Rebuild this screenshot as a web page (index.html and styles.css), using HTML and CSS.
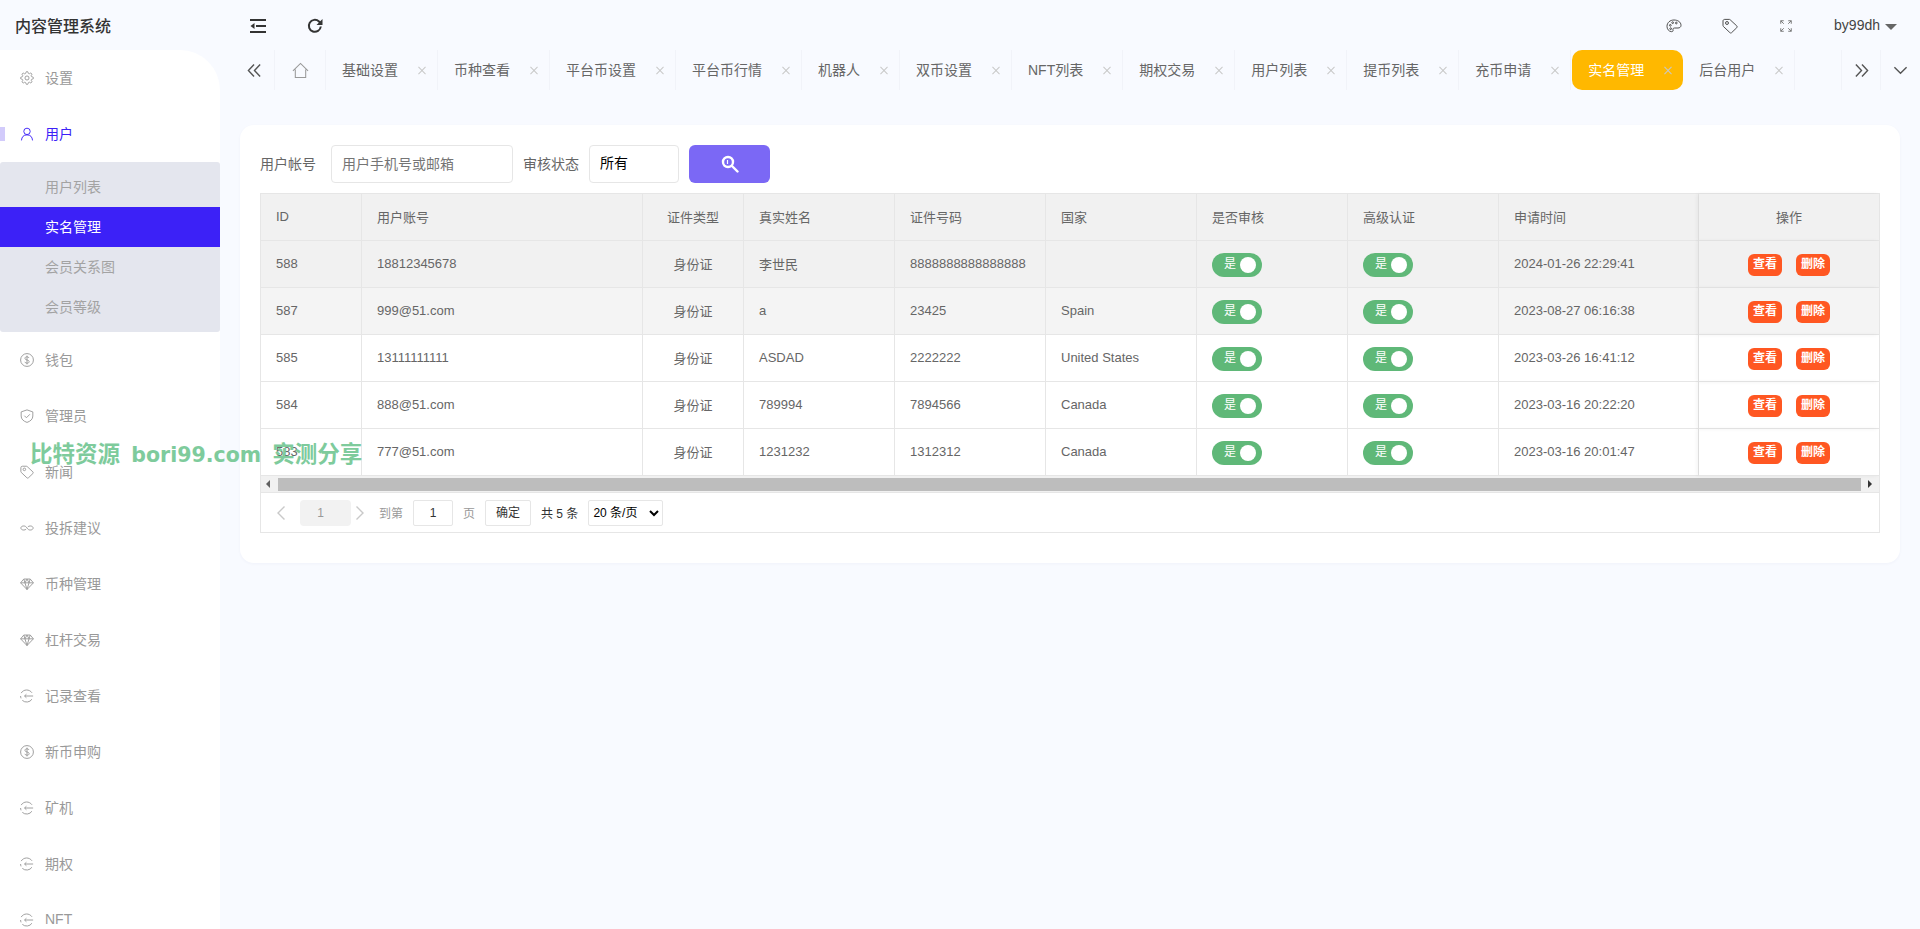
FILE: index.html
```html
<!DOCTYPE html>
<html lang="zh-CN">
<head>
    <meta charset="UTF-8">
    <link rel="stylesheet" href="styles.css">
    <title>内容管理系统</title>
</head>
<body>
<svg class="icon-defs" width="0" height="0">
  <symbol id="i-gear" viewBox="0 0 24 24"><circle cx="12" cy="12" r="3.5"/><path d="M19.4 15a1.65 1.65 0 0 0 .33 1.82l.06.06a2 2 0 0 1 0 2.83 2 2 0 0 1-2.83 0l-.06-.06a1.65 1.65 0 0 0-1.82-.33 1.65 1.65 0 0 0-1 1.51V21a2 2 0 0 1-2 2 2 2 0 0 1-2-2v-.09A1.65 1.65 0 0 0 9 19.4a1.65 1.65 0 0 0-1.82.33l-.06.06a2 2 0 0 1-2.83 0 2 2 0 0 1 0-2.83l.06-.06a1.65 1.65 0 0 0 .33-1.82 1.65 1.65 0 0 0-1.51-1H3a2 2 0 0 1-2-2 2 2 0 0 1 2-2h.09A1.65 1.65 0 0 0 4.6 9a1.65 1.65 0 0 0-.33-1.82l-.06-.06a2 2 0 0 1 0-2.83 2 2 0 0 1 2.83 0l.06.06a1.65 1.65 0 0 0 1.82.33H9a1.65 1.65 0 0 0 1-1.51V3a2 2 0 0 1 2-2 2 2 0 0 1 2 2v.09a1.65 1.65 0 0 0 1 1.51 1.65 1.65 0 0 0 1.82-.33l.06-.06a2 2 0 0 1 2.83 0 2 2 0 0 1 0 2.83l-.06.06a1.65 1.65 0 0 0-.33 1.82V9a1.65 1.65 0 0 0 1.51 1H21a2 2 0 0 1 2 2 2 2 0 0 1-2 2h-.09a1.65 1.65 0 0 0-1.51 1z"/></symbol>
  <symbol id="i-user" viewBox="0 0 24 24"><circle cx="12" cy="7.5" r="5.5"/><path d="M2.5 23c.5-6 3.5-9.5 9.500-9.500s9 3.500 9.500 9.500"/></symbol>
  <symbol id="i-coin" viewBox="0 0 24 24"><circle cx="12" cy="12" r="11"/><path d="M15.500 8.500c-.5-1.300-2-2-3.500-2-2 0-3.500 1-3.500 2.700 0 3.800 7.200 1.800 7.200 5.600 0 1.700-1.700 2.700-3.700 2.700-1.800 0-3.300-.8-3.800-2.300M12 4.500v15"/></symbol>
  <symbol id="i-shield" viewBox="0 0 24 24"><path d="M12 1.500l10 3.500v7c0 5.500-4 9-10 11-6-2-10-5.500-10-11V5z"/><path d="M7.500 11.500l3.500 3.500 6-6"/></symbol>
  <symbol id="i-tag" viewBox="0 0 24 24"><path d="M1.500 4.500v6.800c0 .6.200 1 .6 1.400l9.700 9.200c.8.800 1.900.8 2.700 0l7.600-7.300c.8-.8.8-2 0-2.800L12.300 2.700c-.4-.4-.9-.6-1.400-.6H4c-1.500 0-2.500 1-2.500 2.400z"/><circle cx="7.500" cy="7.500" r="2.200"/></symbol>
  <symbol id="i-link" viewBox="0 0 24 24"><path d="M12 12c-1.500-2.200-3-3.500-5.500-3.500C3.500 8.500 1.500 10 1.500 12s2 3.500 5 3.500c1.700 0 3-.6 4-1.500M12 12c1.500 2.200 3 3.500 5.500 3.500 3 0 5-1.500 5-3.500s-2-3.500-5-3.500c-1.700 0-3 .6-4 1.500"/></symbol>
  <symbol id="i-gem" viewBox="0 0 24 24"><path d="M6.500 3.500h11L23 10 12 21.500 1 10zM1 10h22M8.500 10L12 21.500 15.500 10M6.500 3.500L8.500 10 12 3.500 15.500 10 17.500 3.500"/></symbol>
  <symbol id="i-swap" viewBox="0 0 24 24"><path d="M20.500 6.500A11 11 0 0 0 2 7M1 12a11 11 0 0 0 .8 4M4 19.500A11 11 0 0 0 20.500 17.500"/><path d="M22.500 12H8M11 9l-3.200 3 3.200 3"/></symbol>
</svg>

<div class="watermark">比特资源 <span class="wm-latin">bori99.com</span> 实测分享</div>

<header class="topbar">
  <div class="logo">内容管理系统</div>
  <div class="tool-left">
    <svg class="tool-icon" viewBox="0 0 16 16"><path d="M0 2h16M6 8h10M0 14h16"/><path class="solid" d="M4.500 5v6L0.500 8z"/></svg>
    <svg class="tool-icon refresh" viewBox="0 0 16 16"><path d="M13.800 8.500a6 6 0 1 1-1.800-5L14 5.500"/><path class="solid" d="M15.500 1v6h-6z"/></svg>
  </div>
  <div class="tool-right">
    <svg class="tool-icon" viewBox="0 0 24 24"><path d="M12 3C6 3 1.500 7 1.500 12.500c0 4 2.500 7.500 6.500 8 2 .2 3-1 2.500-2.500-.5-1.700.5-3 2.500-3h5c2.500 0 4.500-1.500 4.500-4C22.500 6 17.500 3 12 3z"/><circle cx="6.500" cy="11" r="1.300"/><circle cx="10" cy="7" r="1.300"/><circle cx="15.500" cy="7.500" r="1.300"/><circle cx="7" cy="16" r="1.300"/></svg>
    <svg class="tool-icon"><use href="#i-tag"/></svg>
    <svg class="tool-icon small" viewBox="0 0 16 16"><path d="M1 5V1h4M1 1l4 4M15 5V1h-4M15 1l-4 4M1 11v4h4M1 15l4-4M15 11v4h-4M15 15l-4-4"/></svg>
    <div class="user-menu">by99dh<span class="caret"></span></div>
  </div>
</header>

<div class="app">
  <aside class="sidebar">
    <a class="nav-item"><svg class="nav-icon"><use href="#i-gear"/></svg>设置</a>
    <a class="nav-item open"><svg class="nav-icon"><use href="#i-user"/></svg>用户</a>
    <div class="sub-nav">
      <a class="sub-item">用户列表</a>
      <a class="sub-item active">实名管理</a>
      <a class="sub-item">会员关系图</a>
      <a class="sub-item">会员等级</a>
    </div>
    <a class="nav-item"><svg class="nav-icon"><use href="#i-coin"/></svg>钱包</a>
    <a class="nav-item"><svg class="nav-icon"><use href="#i-shield"/></svg>管理员</a>
    <a class="nav-item"><svg class="nav-icon"><use href="#i-tag"/></svg>新闻</a>
    <a class="nav-item"><svg class="nav-icon"><use href="#i-link"/></svg>投拆建议</a>
    <a class="nav-item"><svg class="nav-icon"><use href="#i-gem"/></svg>币种管理</a>
    <a class="nav-item"><svg class="nav-icon"><use href="#i-gem"/></svg>杠杆交易</a>
    <a class="nav-item"><svg class="nav-icon"><use href="#i-swap"/></svg>记录查看</a>
    <a class="nav-item"><svg class="nav-icon"><use href="#i-coin"/></svg>新币申购</a>
    <a class="nav-item"><svg class="nav-icon"><use href="#i-swap"/></svg>矿机</a>
    <a class="nav-item"><svg class="nav-icon"><use href="#i-swap"/></svg>期权</a>
    <a class="nav-item"><svg class="nav-icon"><use href="#i-swap"/></svg>NFT</a>
  </aside>

  <main class="main">
    <div class="tabs">
      <div class="tab-btn prev"><svg class="tab-arrow" viewBox="0 0 16 16"><path d="M7.500 1.500L1.500 8l6 6.500M14 1.500L8 8l6 6.500"/></svg></div>
      <div class="tab-btn home"><svg class="home-icon" viewBox="0 0 18 18"><path d="M1 9.500L9 1.500l8 8M3.500 8v8.500h11V8"/></svg></div>
      <div class="tab">基础设置<span class="tab-close"></span></div>
      <div class="tab">币种查看<span class="tab-close"></span></div>
      <div class="tab">平台币设置<span class="tab-close"></span></div>
      <div class="tab">平台币行情<span class="tab-close"></span></div>
      <div class="tab">机器人<span class="tab-close"></span></div>
      <div class="tab">双币设置<span class="tab-close"></span></div>
      <div class="tab">NFT列表<span class="tab-close"></span></div>
      <div class="tab">期权交易<span class="tab-close"></span></div>
      <div class="tab">用户列表<span class="tab-close"></span></div>
      <div class="tab">提币列表<span class="tab-close"></span></div>
      <div class="tab">充币申请<span class="tab-close"></span></div>
      <div class="tab current">实名管理<span class="tab-close"></span></div>
      <div class="tab">后台用户<span class="tab-close"></span></div>
      <div class="tab-spacer"></div>
      <div class="tab-btn next"><svg class="tab-arrow" viewBox="0 0 16 16"><path d="M2 1.500L8 8l-6 6.500M8.500 1.500l6 6.500-6 6.500"/></svg></div>
      <div class="tab-btn more"><svg class="tab-arrow" viewBox="0 0 16 16"><path d="M1.500 4.500L8 11l6.500-6.500"/></svg></div>
    </div>

    <section class="card">
      <form class="search-row">
        <label class="search-label">用户帐号</label>
        <input class="search-input" type="text" placeholder="用户手机号或邮箱">
        <label class="search-label second">审核状态</label>
        <div class="search-select">所有</div>
        <button class="search-btn" type="button">
          <svg viewBox="0 0 18 18" width="18" height="18"><circle cx="7" cy="7" r="5" fill="none" stroke="#fff" stroke-width="2.400"/><path d="M11 11l5.500 5.500" stroke="#fff" stroke-width="2.400" stroke-linecap="round"/><path d="M6.500 5v4" stroke="#fff" stroke-width="1.200"/></svg>
        </button>
      </form>

      <div class="table-box">
        <table class="data-table">
          <colgroup>
            <col class="c-id"><col class="c-account"><col class="c-type"><col class="c-mid"><col class="c-mid"><col class="c-mid"><col class="c-mid"><col class="c-mid"><col class="c-time"><col class="c-ops">
          </colgroup>
          <thead>
            <tr><th>ID</th><th>用户账号</th><th class="center">证件类型</th><th>真实姓名</th><th>证件号码</th><th>国家</th><th>是否审核</th><th>高级认证</th><th>申请时间</th><th class="center fixed">操作</th></tr>
          </thead>
          <tbody>
            <tr class="row-a">
              <td>588</td><td>18812345678</td><td class="center">身份证</td><td>李世民</td><td>8888888888888888</td><td></td>
              <td class="ctl"><span class="switch">是<i></i></span></td><td class="ctl"><span class="switch">是<i></i></span></td>
              <td>2024-01-26 22:29:41</td><td class="ctl center fixed"><a class="op-btn">查看</a><a class="op-btn">删除</a></td>
            </tr>
            <tr class="row-b">
              <td>587</td><td>999@51.com</td><td class="center">身份证</td><td>a</td><td>23425</td><td>Spain</td>
              <td class="ctl"><span class="switch">是<i></i></span></td><td class="ctl"><span class="switch">是<i></i></span></td>
              <td>2023-08-27 06:16:38</td><td class="ctl center fixed"><a class="op-btn">查看</a><a class="op-btn">删除</a></td>
            </tr>
            <tr>
              <td>585</td><td>13111111111</td><td class="center">身份证</td><td>ASDAD</td><td>2222222</td><td>United States</td>
              <td class="ctl"><span class="switch">是<i></i></span></td><td class="ctl"><span class="switch">是<i></i></span></td>
              <td>2023-03-26 16:41:12</td><td class="ctl center fixed"><a class="op-btn">查看</a><a class="op-btn">删除</a></td>
            </tr>
            <tr>
              <td>584</td><td>888@51.com</td><td class="center">身份证</td><td>789994</td><td>7894566</td><td>Canada</td>
              <td class="ctl"><span class="switch">是<i></i></span></td><td class="ctl"><span class="switch">是<i></i></span></td>
              <td>2023-03-16 20:22:20</td><td class="ctl center fixed"><a class="op-btn">查看</a><a class="op-btn">删除</a></td>
            </tr>
            <tr>
              <td>583</td><td>777@51.com</td><td class="center">身份证</td><td>1231232</td><td>1312312</td><td>Canada</td>
              <td class="ctl"><span class="switch">是<i></i></span></td><td class="ctl"><span class="switch">是<i></i></span></td>
              <td>2023-03-16 20:01:47</td><td class="ctl center fixed"><a class="op-btn">查看</a><a class="op-btn">删除</a></td>
            </tr>
          </tbody>
        </table>

        <div class="hscroll">
          <span class="hs-arrow left"></span>
          <div class="hs-thumb"></div>
          <span class="hs-arrow right"></span>
        </div>

        <div class="pager">
          <svg class="pg-arrow" viewBox="0 0 10 16"><path d="M8.500 1.500L2 8l6.500 6.500"/></svg>
          <span class="pg-current">1</span>
          <svg class="pg-arrow" viewBox="0 0 10 16"><path d="M1.500 1.500L8 8l-6.500 6.500"/></svg>
          <span class="pg-text first">到第</span>
          <span class="pg-input">1</span>
          <span class="pg-text">页</span>
          <span class="pg-ok">确定</span>
          <span class="pg-count">共 5 条</span>
          <select class="pg-size"><option>20 条/页</option></select>
        </div>
      </div>
    </section>
  </main>
</div>
</body>
</html>
```

FILE: styles.css
```css
* {
  box-sizing: border-box;
}

body {
  margin: 0;
  height: 929px;
  overflow: hidden;
  position: relative;
  background-color: #f8faff;
  color: #666;
  font-family: "Liberation Sans", "Noto Sans CJK SC", sans-serif;
  font-size: 13px;
}

.icon-defs {
  position: absolute;
}

/* watermark lies over the sidebar and the table */
.watermark {
  position: absolute;
  left: 30px;
  top: 439px;
  z-index: 10;
  color: #7ecb9c;
  font-size: 22.500px;
  line-height: 32px;
  font-weight: 700;
  word-spacing: 5px;
  white-space: nowrap;
}

.wm-latin {
  font-family: "DejaVu Sans", sans-serif;
  font-size: 20.500px;
}

/* top bar */
.topbar {
  display: flex;
  align-items: center;
  height: 50px;
}

.logo {
  width: 220px;
  padding-left: 15px;
  font-size: 16px;
  font-weight: 500;
  color: #333;
}

.tool-left {
  display: flex;
  align-items: center;
  gap: 41px;
  padding: 2px 0 0 30px;
}

.tool-right {
  display: flex;
  align-items: center;
  gap: 40px;
  margin-left: auto;
  padding: 2px 23px 0 0;
}

.tool-icon {
  display: block;
  width: 16px;
  height: 16px;
  fill: none;
  stroke: #444;
  stroke-width: 1.400;
}

.tool-left .tool-icon {
  stroke: #333;
  stroke-width: 2;
}

.tool-icon .solid {
  fill: #333;
  stroke: none;
}

.tool-right .small {
  width: 12px;
  height: 12px;
  margin-left: 2px;
  stroke: #777;
  stroke-width: 1.300;
}

.user-menu {
  display: flex;
  align-items: center;
  margin: -2px 0 0 2px;
  font-size: 14px;
  color: #444;
}

.caret {
  margin: 3px 0 0 5px;
  border-left: 6px solid transparent;
  border-right: 6px solid transparent;
  border-top: 6px solid #666;
}

/* sidebar */
.app {
  display: flex;
  height: 879px;
}

.sidebar {
  flex: 0 0 220px;
  background-color: #fff;
  border-top-right-radius: 40px;
  overflow: hidden;
}

.nav-item {
  display: flex;
  align-items: center;
  position: relative;
  height: 56px;
  padding: 0 0 2px 20px;
  font-size: 14px;
  color: #999;
}

.nav-item.open {
  color: #3c21f7;
}

.nav-item.open::before {
  content: "";
  position: absolute;
  left: 0;
  top: 21px;
  width: 5px;
  height: 14px;
  background-color: #d2cbfb;
}

.nav-icon {
  flex: none;
  width: 14px;
  height: 14px;
  margin: 2px 11px 0 0;
  fill: none;
  stroke: #999;
  stroke-width: 1.600;
}

.nav-item.open .nav-icon {
  stroke: #3c21f7;
}

.sub-nav {
  padding: 5px 0;
  background-color: #e4e6ee;
  border-radius: 3px;
}

.sub-item {
  display: block;
  height: 40px;
  padding-left: 45px;
  font-size: 14px;
  line-height: 40px;
  color: #a3a3a3;
}

.sub-item.active {
  background-color: #3c21f7;
  color: #fff;
}

/* tabs */
.main {
  flex: 1;
  min-width: 0;
}

.tabs {
  display: flex;
  height: 40px;
  font-size: 14px;
  color: #666;
}

.tab-btn {
  display: flex;
  flex: none;
  align-items: center;
  justify-content: center;
  border-right: 1px solid #f1f3f9;
}

.tab-btn.prev {
  width: 55px;
  padding-left: 15px;
}

.tab-btn.home {
  width: 51px;
}

.tab-btn.next {
  width: 40px;
  border-left: 1px solid #f1f3f9;
}

.tab-btn.more {
  width: 39px;
  border-right: 0;
}

.tab-arrow {
  width: 15px;
  height: 15px;
  fill: none;
  stroke: #555;
  stroke-width: 1.500;
}

.home-icon {
  width: 17px;
  height: 17px;
  fill: none;
  stroke: #999;
  stroke-width: 1.100;
}

.tab {
  display: flex;
  flex: none;
  align-items: center;
  padding: 0 9px 2px 16px;
  border-right: 1px solid #f1f3f9;
  white-space: nowrap;
}

.tab-close {
  position: relative;
  width: 12px;
  height: 12px;
  margin: 2px 0 0 18px;
}

.tab-close::before,
.tab-close::after {
  content: "";
  position: absolute;
  left: 1px;
  top: 5.500px;
  width: 10px;
  height: 1px;
  background-color: #c8c8c8;
  transform: rotate(45deg);
}

.tab-close::after {
  transform: rotate(-45deg);
}

.tab.current {
  width: 111px;
  margin-left: 1px;
  background-color: #ffb800;
  border-right: 0;
  border-radius: 10px;
  color: #fff;
}

.tab-spacer {
  flex: 1;
}

/* card */
.card {
  margin: 35px 20px 0;
  padding: 20px 20px 30px;
  background-color: #fff;
  border-radius: 14px;
  box-shadow: 0 1px 3px rgba(40, 60, 120, 0.04);
}

.search-row {
  display: flex;
  align-items: center;
  height: 38px;
  margin: 0 0 10px;
  font-size: 14px;
}

.search-label {
  width: 56px;
  margin: 0 15px 2px 0;
  color: #666;
}

.search-label.second {
  margin: 0 10px 2px 10px;
}

.search-input,
.search-select {
  height: 38px;
  border: 1px solid #e6e6e6;
  border-radius: 4px;
  background-color: #fff;
  font: inherit;
  padding: 0 10px;
}

.search-input {
  width: 182px;
}

.search-input::placeholder {
  color: #757575;
}

.search-select {
  width: 90px;
  line-height: 34px;
  color: #000;
}

.search-btn {
  display: flex;
  align-items: center;
  justify-content: center;
  width: 81px;
  height: 38px;
  margin-left: 10px;
  border: 0;
  border-radius: 6px;
  background-color: #7b68f5;
}

/* table */
.table-box {
  border: 1px solid #e6e6e6;
}

.data-table {
  width: 1618px;
  table-layout: fixed;
  border-collapse: separate;
  border-spacing: 0;
}

.c-id { width: 101px; }
.c-account { width: 281px; }
.c-type { width: 101px; }
.c-mid { width: 151px; }
.c-time { width: 200px; }
.c-ops { width: 180px; }

.data-table th,
.data-table td {
  height: 47px;
  padding: 0 15px 2px;
  border-right: 1px solid #e6e6e6;
  border-bottom: 1px solid #e6e6e6;
  font-weight: 400;
  text-align: left;
  color: #666;
  white-space: nowrap;
  overflow: hidden;
}

.data-table th {
  background-color: #f1f1f1;
}

.row-a td {
  background-color: #f1f1f1;
}

.row-b td {
  background-color: #f4f4f4;
}

.data-table .center {
  text-align: center;
}

.data-table .ctl {
  padding-bottom: 0;
}

.data-table .fixed {
  position: relative;
  padding-left: 14px;
  padding-right: 14px;
  border-right: 0;
  box-shadow: -2px 0 4px rgba(0, 0, 0, 0.05);
}

.switch {
  display: block;
  position: relative;
  width: 50px;
  height: 24px;
  margin-top: 1px;
  padding-left: 12px;
  border-radius: 12px;
  background-color: #5fb878;
  font-size: 12px;
  line-height: 22px;
  color: #fff;
}

.switch i {
  position: absolute;
  right: 6px;
  top: 4px;
  width: 16px;
  height: 16px;
  border-radius: 50%;
  background-color: #fff;
}

.op-btn {
  display: inline-block;
  width: 34px;
  height: 22px;
  margin-top: 2px;
  border-radius: 6px;
  background-color: #ff5722;
  font-size: 12px;
  font-weight: 700;
  line-height: 20px;
  color: #fff;
  text-align: center;
  vertical-align: middle;
}

.op-btn + .op-btn {
  margin-left: 14px;
}

/* fake horizontal scrollbar */
.hscroll {
  display: flex;
  align-items: center;
  height: 17px;
  background-color: #f1f1f1;
  border-bottom: 1px solid #e6e6e6;
}

.hs-arrow {
  width: 0;
  height: 0;
  border-top: 4px solid transparent;
  border-bottom: 4px solid transparent;
}

.hs-arrow.left {
  margin-left: 5px;
  border-right: 4px solid #606060;
}

.hs-arrow.right {
  margin-left: 7px;
  border-left: 4px solid #333;
}

.hs-thumb {
  width: 1583px;
  height: 13px;
  margin-left: 8px;
  background-color: #bdbdbd;
}

/* pagination */
.pager {
  display: flex;
  align-items: center;
  height: 39px;
  padding-left: 15px;
  font-size: 12px;
  color: #999;
}

.pg-arrow {
  width: 10px;
  height: 16px;
  fill: none;
  stroke: #c9c9c9;
  stroke-width: 1.400;
}

.pg-current {
  width: 51px;
  height: 26px;
  margin: 0 4px 0 14px;
  padding-right: 10px;
  border-radius: 4px;
  background-color: #f2f2f2;
  line-height: 26px;
  text-align: center;
}

.pg-text.first {
  margin-left: 14px;
}

.pg-input {
  width: 40px;
  height: 26px;
  margin: 0 10px;
  border: 1px solid #e6e6e6;
  border-radius: 2px;
  line-height: 24px;
  text-align: center;
  color: #333;
}

.pg-ok {
  width: 46px;
  height: 26px;
  margin-left: 10px;
  border: 1px solid #e6e6e6;
  border-radius: 2px;
  line-height: 24px;
  text-align: center;
  color: #333;
}

.pg-count {
  margin-left: 10px;
  color: #333;
}

.pg-size {
  width: 75px;
  height: 26px;
  margin-left: 10px;
  border: 1px solid #e6e6e6;
  border-radius: 2px;
  background-color: #fff;
  font: inherit;
  color: #000;
}
```
